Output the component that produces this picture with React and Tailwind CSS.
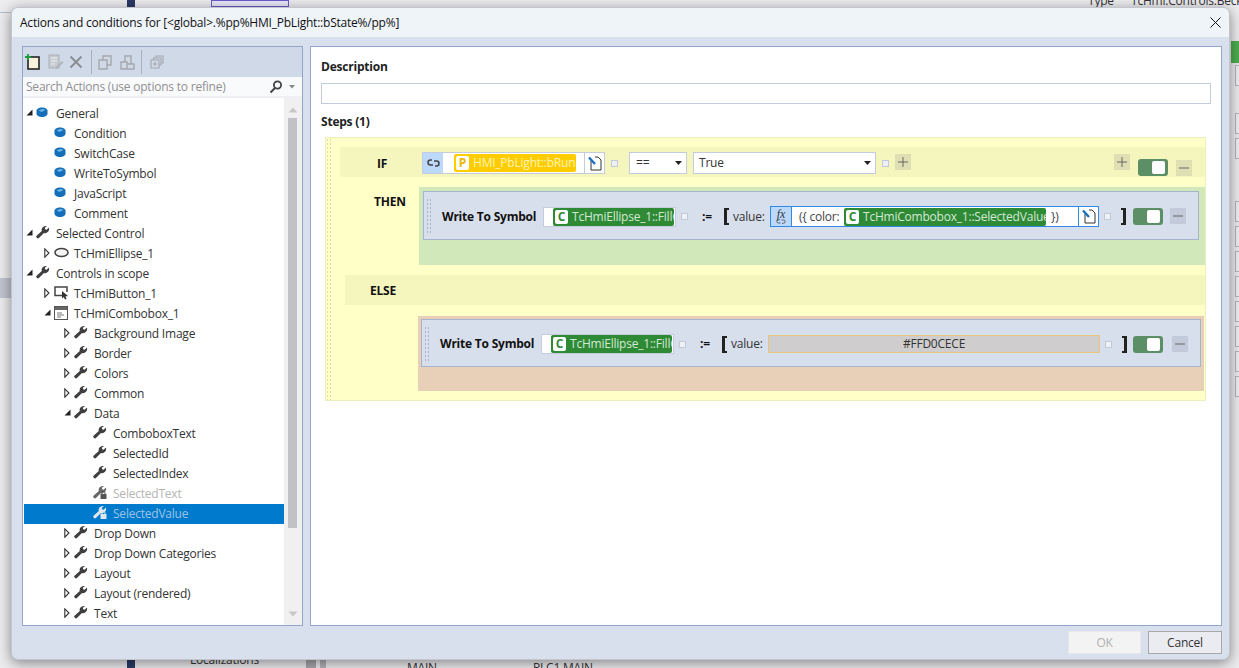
import React from "react";

const FONT = "font-['Open_Sans','Noto_Sans',sans-serif]";

function Cube({ className = "" }) {
    return (
        <svg width="12" height="11" viewBox="0 0 12 11" className={className}>
            <path d="M0.5 3.5 C0.5 2 3 0.5 6 0.5 C9 0.5 11.5 2 11.5 3.5 V7 C11.5 8.5 9 10 6 10 C3 10 0.5 8.5 0.5 7 Z" fill="#146fb8" />
            <path d="M2.5 3.6 L6.5 1.8 L9.5 3 L5.5 5 Z" fill="#6db2e4" />
        </svg>
    );
}

function Wrench({ locked, light }) {
    const fill = light ? "#dfe6ee" : locked ? "#666" : "#3f3f3f";
    return (
        <svg width="14" height="13" viewBox="0 0 14 13">
            <path d="M13 1.5 L10.6 3.8 L9.2 3.2 L8.8 1.8 L11 0 C8.2 -0.4 5.6 1.4 5.6 4 C5.6 4.4 5.7 4.8 5.8 5 L0.8 9.4 C-0.2 10.4 0 11 0.8 11.8 C1.6 12.6 2.4 12.6 3.2 11.8 L8 7 C8.4 7.2 8.8 7.2 9.2 7.2 C11.8 7.2 13.8 4.4 13 1.5 Z" fill={fill} />
            {locked && (
                <g>
                    <rect x="7.5" y="8" width="6" height="5" fill={light ? "#dfe6ee" : "#555"} />
                    <path d="M9 8 V6.8 A1.5 1.5 0 0 1 12 6.8 V8" fill="none" stroke={light ? "#dfe6ee" : "#555"} strokeWidth="1" />
                </g>
            )}
        </svg>
    );
}

function Ellipse() {
    return (
        <svg width="15" height="11" viewBox="0 0 15 11">
            <ellipse cx="7.5" cy="5.5" rx="6.5" ry="4" fill="#f4f4f4" stroke="#444" strokeWidth="1.6" />
        </svg>
    );
}

function ButtonIcon() {
    return (
        <svg width="15" height="14" viewBox="0 0 15 14">
            <path d="M9 9.5 H1 V1 H13 V6" fill="none" stroke="#444" strokeWidth="1.5" />
            <path d="M8 5 L14 10 L11.4 10.4 L12.6 13 L11 13.6 L9.8 11 L8 12.6 Z" fill="#333" />
        </svg>
    );
}

function ComboIcon() {
    return (
        <svg width="14" height="14" viewBox="0 0 14 14">
            <rect x="0.5" y="0.5" width="13" height="13" fill="#fff" stroke="#555" />
            <rect x="1" y="1" width="12" height="3" fill="#666" />
            <path d="M3 7 H8 M3 9 H10 M3 11 H7" stroke="#777" strokeWidth="1" />
        </svg>
    );
}

function Arrow({ open }) {
    if (open) {
        return (
            <svg width="7" height="7" viewBox="0 0 7 7">
                <path d="M6.5 0.5 V6.5 H0.5 Z" fill="#222" />
            </svg>
        );
    }
    return (
        <svg width="6" height="10" viewBox="0 0 6 10">
            <path d="M0.8 0.8 L5 5 L0.8 9.2 Z" fill="#fff" stroke="#333" strokeWidth="1.1" />
        </svg>
    );
}

const treeRows = [
    { label: "General", pad: "pl-[3px]", arrow: "open", icon: "cube" },
    { label: "Condition", pad: "pl-[21px]", icon: "cube" },
    { label: "SwitchCase", pad: "pl-[21px]", icon: "cube" },
    { label: "WriteToSymbol", pad: "pl-[21px]", icon: "cube" },
    { label: "JavaScript", pad: "pl-[21px]", icon: "cube" },
    { label: "Comment", pad: "pl-[21px]", icon: "cube" },
    { label: "Selected Control", pad: "pl-[3px]", arrow: "open", icon: "wrench" },
    { label: "TcHmiEllipse_1", pad: "pl-[21px]", arrow: "closed", icon: "ellipse" },
    { label: "Controls in scope", pad: "pl-[3px]", arrow: "open", icon: "wrench" },
    { label: "TcHmiButton_1", pad: "pl-[21px]", arrow: "closed", icon: "button" },
    { label: "TcHmiCombobox_1", pad: "pl-[21px]", arrow: "open", icon: "combo" },
    { label: "Background Image", pad: "pl-[41px]", arrow: "closed", icon: "wrench" },
    { label: "Border", pad: "pl-[41px]", arrow: "closed", icon: "wrench" },
    { label: "Colors", pad: "pl-[41px]", arrow: "closed", icon: "wrench" },
    { label: "Common", pad: "pl-[41px]", arrow: "closed", icon: "wrench" },
    { label: "Data", pad: "pl-[41px]", arrow: "open", icon: "wrench" },
    { label: "ComboboxText", pad: "pl-[60px]", icon: "wrench" },
    { label: "SelectedId", pad: "pl-[60px]", icon: "wrench" },
    { label: "SelectedIndex", pad: "pl-[60px]", icon: "wrench" },
    { label: "SelectedText", pad: "pl-[60px]", icon: "lock", muted: true },
    { label: "SelectedValue", pad: "pl-[60px]", icon: "lock", selected: true },
    { label: "Drop Down", pad: "pl-[41px]", arrow: "closed", icon: "wrench" },
    { label: "Drop Down Categories", pad: "pl-[41px]", arrow: "closed", icon: "wrench" },
    { label: "Layout", pad: "pl-[41px]", arrow: "closed", icon: "wrench" },
    { label: "Layout (rendered)", pad: "pl-[41px]", arrow: "closed", icon: "wrench" },
    { label: "Text", pad: "pl-[41px]", arrow: "closed", icon: "wrench" },
];

function TreeIcon({ row }) {
    if (row.icon === "cube") return <Cube />;
    if (row.icon === "ellipse") return <Ellipse />;
    if (row.icon === "button") return <ButtonIcon />;
    if (row.icon === "combo") return <ComboIcon />;
    if (row.icon === "lock") return <Wrench locked light={row.selected} />;
    return <Wrench />;
}

function TreeRow({ row }) {
    let textColor = "text-[#333]";
    if (row.muted) textColor = "text-[#b4b4b4]";
    if (row.selected) textColor = "text-[#9fc3e4]";
    return (
        <div className={`h-5 flex items-center ${row.pad} ${row.selected ? "bg-[#007acc]" : ""} ${textColor}`}>
            <span className="w-[9px] -ml-[1px] mr-[1px] flex items-center shrink-0 -mt-[3px]">
                {row.arrow && <Arrow open={row.arrow === "open"} />}
            </span>
            <span className="w-[20px] flex items-center shrink-0 -mt-[3px]">
                <TreeIcon row={row} />
            </span>
            <span className="whitespace-nowrap">{row.label}</span>
        </div>
    );
}

function CopyIcon({ variant }) {
    return (
        <svg width="15" height="15" viewBox="0 0 15 15" fill="none" stroke="#a5a8ad" strokeWidth="1.4">
            {variant === "a" && <path d="M1 5 H9 V14 H1 Z M5 5 V1 H13 V10 H9" />}
            {variant === "b" && <path d="M1 7 H7 V14 H1 Z M7 9 H14 V14 H7 M5 7 V1 H11 V9" />}
            {variant === "c" && <path d="M1 5 H9 V13 H1 Z M3.5 5 V3 H11 V10 H9 M6 3 V1 H13 V8 H11 M3 9 H7 M5 7 V11" strokeWidth="1.1" />}
        </svg>
    );
}

function Toolbar() {
    return (
        <div className="h-[30px] bg-[#cfd9e8] flex items-center pl-[2px] shrink-0">
            <svg width="16" height="16" viewBox="0 0 16 16" fill="none">
                <rect x="3" y="3" width="11" height="12" fill="#f8f3dc" stroke="#222" strokeWidth="1.6" />
                <path d="M3 0 V6 M0 3 H6" stroke="#1c9c3c" strokeWidth="1.8" />
            </svg>
            <svg width="16" height="16" viewBox="0 0 16 16" fill="none" className="ml-[7px]">
                <rect x="1" y="1" width="10" height="13" fill="#c6cbd1" stroke="#aeb2b8" />
                <path d="M3 4 H9 M3 7 H9 M3 10 H7" stroke="#eee" />
                <path d="M8 13 L14 7 L15.5 8.5 L9.5 14.5 L7.5 15 Z" fill="#b0b4b8" />
            </svg>
            <svg width="14" height="14" viewBox="0 0 14 14" fill="none" className="ml-[5px]">
                <path d="M1.5 1.5 L12.5 12.5 M12.5 1.5 L1.5 12.5" stroke="#8b8e94" strokeWidth="2" />
            </svg>
            <div className="w-px h-6 bg-[#a8b1c0] ml-2" />
            <span className="ml-[6px] flex"><CopyIcon variant="a" /></span>
            <span className="ml-[7px] flex"><CopyIcon variant="b" /></span>
            <div className="w-px h-6 bg-[#a8b1c0] ml-[6px]" />
            <span className="ml-2 flex"><CopyIcon variant="c" /></span>
        </div>
    );
}

function LeftPanel() {
    return (
        <div className="w-[281px] shrink-0 border border-[#93a5c8] flex flex-col bg-white">
            <Toolbar />
            <div className="h-[21px] bg-[#f9fafb] border-b-2 border-[#eef0f4] flex items-center pl-[3px] pr-1 text-[#909090] shrink-0">
                <span className="flex-1 whitespace-nowrap">Search Actions (use options to refine)</span>
                <svg width="14" height="14" viewBox="0 0 14 14" fill="none">
                    <circle cx="8.5" cy="5" r="3.6" stroke="#444" strokeWidth="1.8" />
                    <path d="M6 8 L1.5 12.5" stroke="#444" strokeWidth="2" />
                </svg>
                <svg width="7" height="4" viewBox="0 0 7 4" className="ml-[6px] mr-[2px]">
                    <path d="M0 0 H6 L3 3.5 Z" fill="#888" />
                </svg>
            </div>
            <div className="flex-1 flex min-h-0 pl-[1px]">
                <div className="flex-1 min-w-0 pt-[6px]">
                    {treeRows.map((row) => <TreeRow key={row.label} row={row} />)}
                </div>
                <div className="w-[18px] bg-[#f0f0f0] flex flex-col items-center pr-[1px] shrink-0">
                    <svg width="10" height="6" viewBox="0 0 10 6" className="mt-[9px]">
                        <path d="M5 0.5 L9.5 5.5 H0.5 Z" fill="#c8c8c8" />
                    </svg>
                    <div className="w-[9px] h-[410px] bg-[#c1c2c6] mt-[5px]" />
                    <div className="flex-1" />
                    <svg width="10" height="6" viewBox="0 0 10 6" className="mb-2">
                        <path d="M5 5.5 L9.5 0.5 H0.5 Z" fill="#c8c8c8" />
                    </svg>
                </div>
            </div>
        </div>
    );
}

function Grip() {
    return <div className="w-[6px] self-stretch my-1 bg-[radial-gradient(#aab4c8_0.7px,transparent_0.8px)] bg-[length:3px_4px] shrink-0" />;
}

function SmallSquare({ className = "" }) {
    return <span className={`w-[7px] h-[7px] border border-[#c2c9d8] bg-[#eef0f5] shrink-0 ${className}`} />;
}

function Toggle({ className = "" }) {
    return (
        <span className={`w-[30px] h-[17px] rounded-[3px] bg-[#5d8f66] flex items-center justify-end pr-[3px] shrink-0 ${className}`}>
            <span className="w-[13px] h-[13px] rounded-[2px] bg-white" />
        </span>
    );
}

function SquareButton({ symbol, className = "" }) {
    return (
        <span className={`w-4 h-4 flex items-center justify-center shrink-0 ${className}`}>
            <svg width="10" height="10" viewBox="0 0 10 10">
                <path d={symbol === "plus" ? "M0 5 H10 M5 0 V10" : "M0 5 H10"} stroke="#666" strokeWidth="1" />
            </svg>
        </span>
    );
}

function DocButton({ className = "" }) {
    return (
        <span className={`w-5 flex items-center justify-center shrink-0 bg-white ${className}`}>
            <svg width="14" height="15" viewBox="0 0 14 15" fill="none">
                <path d="M3 5 V14 H13 V4 L10 1 H7" stroke="#333" strokeWidth="1" />
                <path d="M1 1.5 L7 8" stroke="#1670c0" strokeWidth="2.4" />
            </svg>
        </span>
    );
}

function Chip({ letter, text, color, textColor, letterColor, className = "" }) {
    return (
        <span className={`h-[18px] flex items-center overflow-hidden rounded-[2px] whitespace-nowrap ${color} ${textColor} ${className}`}>
            <span className={`w-[13px] h-[14px] bg-white rounded-[2px] flex items-center justify-center font-bold text-[12px] leading-none ml-[2px] mr-[4px] shrink-0 ${letterColor}`}>{letter}</span>
            {text}
        </span>
    );
}

function GreenChip({ text, className }) {
    return <Chip letter="C" text={text} color="bg-[#2f8a36]" textColor="text-[#d5e8d6]" letterColor="text-[#2f8a36]" className={className} />;
}

function Bracket({ right, className = "" }) {
    return (
        <span className={`w-[5px] h-[17px] border-y-2 border-[#222] shrink-0 ${right ? "border-r-[3px]" : "border-l-[3px]"} ${className}`} />
    );
}

function TargetField() {
    return (
        <span className="w-[133px] h-[20px] bg-white border border-[#c3cbdc] flex items-center pl-[9px] shrink-0">
            <GreenChip text="TcHmiEllipse_1::FillColor" className="w-[121px]" />
        </span>
    );
}

function WriteCard({ children, className = "" }) {
    return (
        <div className={`bg-[#d8dfec] border border-[#a5b4cb] flex items-center pl-[2px] pt-[2px] ${className}`}>
            <Grip />
            <span className="font-bold text-[#111] ml-[10px] w-[101px] whitespace-nowrap shrink-0">Write To Symbol</span>
            <TargetField />
            <SmallSquare className="ml-[5px]" />
            <span className="font-bold text-[#111] ml-[15px] w-[22px] -translate-x-px shrink-0">:=</span>
            <Bracket className="-ml-px" />
            <span className="ml-[4px] text-[#333] w-[37px] shrink-0">value:</span>
            {children}
        </div>
    );
}

function IfRow() {
    return (
        <div className="h-[30px] bg-[#f5f5be] ml-[14px] pt-[2px] flex items-center">
            <span className="font-bold text-[#111] w-[82px] pl-[37px] mt-[2px] shrink-0">IF</span>
            <div className="h-[22px] flex border border-[#c3cbdc] shrink-0">
                <span className="w-[20px] bg-[#bcd9fb] flex items-center justify-center">
                    <svg width="13" height="8" viewBox="0 0 13 8" fill="none">
                        <path d="M5 1 H3.5 A2.5 2.5 0 0 0 3.5 6 H6 M8 7 H9.5 A2.5 2.5 0 0 0 9.5 2 H7" stroke="#444" strokeWidth="1.5" />
                    </svg>
                </span>
                <span className="w-[141px] bg-white flex items-center pl-[11px]">
                    <Chip letter="P" text="HMI_PbLight::bRun" color="bg-[#ffcc00]" textColor="text-[#fff4b8]" letterColor="text-[#e8b800]" className="w-[122px]" />
                </span>
                <DocButton className="border-l border-[#c3cbdc]" />
            </div>
            <SmallSquare className="ml-[6px]" />
            <span className="w-[58px] h-[22px] bg-white border border-[#c3cbdc] ml-[11px] flex items-center justify-between pl-[6px] pr-[4px] text-[#333] shrink-0">
                ==
                <svg width="7" height="4" viewBox="0 0 7 4"><path d="M0 0 H7 L3.5 4 Z" fill="#222" /></svg>
            </span>
            <span className="w-[183px] h-[22px] bg-white border border-[#c3cbdc] ml-[6px] flex items-center justify-between pl-[5px] pr-[4px] text-[#333] shrink-0">
                True
                <svg width="7" height="4" viewBox="0 0 7 4"><path d="M0 0 H7 L3.5 4 Z" fill="#222" /></svg>
            </span>
            <SmallSquare className="ml-[6px]" />
            <SquareButton symbol="plus" className="bg-[#dfdfb4] ml-[6px] -mt-[2px]" />
            <span className="flex-1" />
            <SquareButton symbol="plus" className="bg-[#dfdfb4] -mt-[2px]" />
            <Toggle className="ml-2 mt-[8px]" />
            <SquareButton symbol="minus" className="bg-[#dfdfb4] ml-2 mr-[13px] mt-[9px]" />
        </div>
    );
}

function ThenSection() {
    return (
        <div className="flex mt-[10px]">
            <span className="font-bold text-[#111] w-[93px] pl-[48px] pt-[7px] shrink-0">THEN</span>
            <div className="flex-1 bg-[#d1e8ba] h-[78px] pl-1 pr-[6px] pt-1">
                <WriteCard className="h-[49px]">
                    <span className="h-[21px] w-[329px] flex border border-[#2d8be6] shrink-0">
                        <span className="w-[21px] bg-[#bcd9fb] border-r border-[#2d8be6] flex flex-col items-center justify-center font-['Liberation_Serif',serif] italic text-[12px] tracking-normal leading-[10px] text-[#333]">
                            fx
                            <svg width="10" height="5" viewBox="0 0 10 5" fill="none">
                                <path d="M4 0.7 H2.5 A1.6 1.6 0 0 0 2.5 4 H4.5 M6 4.3 H7.5 A1.6 1.6 0 0 0 7.5 1 H5.5" stroke="#555" strokeWidth="0.9" />
                            </svg>
                        </span>
                        <span className="flex-1 bg-white flex items-center pl-[7px] text-[#444] whitespace-nowrap">
                            <span className="w-[45px] shrink-0">{"({ color:"}</span>
                            <GreenChip text="TcHmiCombobox_1::SelectedValue" className="w-[202px] shrink-0" />
                            <span className="ml-[5px]">{"})"}</span>
                        </span>
                        <DocButton className="border-l border-[#2d8be6]" />
                    </span>
                    <SmallSquare className="ml-[5px]" />
                    <Bracket right className="ml-[10px]" />
                    <Toggle className="ml-[7px]" />
                    <SquareButton symbol="minus" className="bg-[#c3cad9] ml-[7px] -mt-[2px]" />
                </WriteCard>
            </div>
        </div>
    );
}

function ElseSection() {
    return (
        <>
            <div className="h-[30px] bg-[#f5f5be] ml-[19px] mt-[10px] pt-[2px] flex items-center font-bold text-[#111] pl-[25px]">ELSE</div>
            <div className="ml-[92px] mr-[1px] mt-[11px] bg-[#e8cfb8] h-[75px] pl-[3px] pr-[3px] pt-[3px]">
                <WriteCard className="h-[48px]">
                    <span className="h-[18px] w-[332px] bg-[#cfcdcd] border border-[#e8c878] flex items-center justify-center text-[#333] shrink-0">#FFD0CECE</span>
                    <SmallSquare className="ml-[5px]" />
                    <Bracket right className="ml-[10px]" />
                    <Toggle className="ml-[6px]" />
                    <SquareButton symbol="minus" className="bg-[#c3cad9] ml-[9px]" />
                </WriteCard>
            </div>
        </>
    );
}

function RightPanel() {
    return (
        <div className="flex-1 min-w-0 bg-white border border-[#93a5c8] pl-[10px] pr-[10px] pt-[12px]">
            <p className="font-bold text-[#222] leading-4">Description</p>
            <div className="h-[21px] border border-[#c3cbdc] mt-[8px] bg-white" />
            <p className="font-bold text-[#222] leading-4 mt-[10px]">Steps (1)</p>
            <div className="relative w-[881px] ml-[4px] mt-[7px] h-[264px] bg-[#ffffc8] border border-[#eeeebc] pt-[9px]">
                <div className="absolute left-0 top-0 bottom-0 w-[6px] bg-[radial-gradient(#dcdca8_0.7px,transparent_0.8px)] bg-[length:3px_4px]" />
                <IfRow />
                <ThenSection />
                <ElseSection />
            </div>
        </div>
    );
}

function Dialog() {
    return (
        <div className="absolute left-[11px] top-[7px] w-[1219px] h-[653px] rounded-[7px] overflow-hidden bg-[#d9e0ed] border border-[#c2c5cc] shadow-[0_3px_14px_rgba(0,0,0,0.45)] flex flex-col">
            <div className="h-[29px] bg-[#eff4f9] flex items-center justify-between pl-2 pr-[8px] shrink-0">
                <span className="text-[#111] whitespace-nowrap">{"Actions and conditions for [<global>.%pp%HMI_PbLight::bState%/pp%]"}</span>
                <svg width="11" height="11" viewBox="0 0 11 11"><path d="M0.5 0.5 L10.5 10.5 M10.5 0.5 L0.5 10.5" stroke="#111" strokeWidth="1" /></svg>
            </div>
            <div className="flex-1 min-h-0 flex gap-[7px] pl-[10px] pr-[7px] pt-[9px]">
                <LeftPanel />
                <RightPanel />
            </div>
            <div className="h-[33px] flex justify-end items-start gap-[7px] pr-[7px] pt-[5px] shrink-0">
                <button className="w-[73px] h-[23px] bg-[#f3f3f4] border border-[#e6e8ee] text-[#b0b0b0]">OK</button>
                <button className="w-[74px] h-[23px] bg-[#ebecf1] border border-[#a8a8a8] text-[#333]">Cancel</button>
            </div>
        </div>
    );
}

function SideBoxes({ count, className = "" }) {
    return (
        <div className={`absolute left-[1235px] flex flex-col gap-[4px] ${className}`}>
            {Array.from({ length: count }, (_, i) => (
                <div key={i} className="w-[8px] h-[21px] border border-[#b4b6c2] bg-[#f1f1f4]" />
            ))}
        </div>
    );
}

export default function App() {
    return (
        <div className={`relative w-[1239px] h-[668px] overflow-hidden bg-[#ededf0] text-[12px] leading-4 tracking-[-0.22px] ${FONT}`}>
            {/* whatever is left of the editor window behind the dialog */}
            <div className="absolute left-0 top-[12px] w-[11px] h-px bg-[#b8bfd0]" />
            <div className="absolute left-0 top-[278px] w-[11px] h-[20px] bg-[#c3c5d2]" />
            <div className="absolute left-[127px] top-0 w-[8px] h-[8px] bg-[#2b3a66]" />
            <div className="absolute left-[127px] top-[660px] w-[8px] h-[8px] bg-[#2b3a66]" />
            <div className="absolute left-[211px] top-0 w-[78px] h-[7px] border border-[#6a5acd] bg-[#e9e8f7]" />
            <div className="absolute left-[306px] top-[660px] w-[10px] h-[8px] bg-[#a9a9ae]" />
            <div className="absolute left-[320px] top-[660px] w-[6px] h-[8px] bg-[#b4b4ba]" />
            <span className="absolute left-[1088px] -top-[7px] text-[#333]">Type</span>
            <span className="absolute left-[1131px] -top-[7px] text-[#333] whitespace-nowrap">TcHmi.Controls.Beckhoff</span>
            <span className="absolute left-[190px] top-[652px] text-[#333]">Localizations</span>
            <span className="absolute left-[407px] top-[660px] text-[#333]">MAIN</span>
            <span className="absolute left-[533px] top-[660px] text-[#333]">PLC1.MAIN</span>
            <div className="absolute left-[1231px] top-[41px] w-[8px] h-[22px] bg-[#4caf50]" />
            <SideBoxes count={1} className="top-[65px]" />
            <SideBoxes count={2} className="top-[113px]" />
            <SideBoxes count={8} className="top-[201px]" />
            <Dialog />
        </div>
    );
}
